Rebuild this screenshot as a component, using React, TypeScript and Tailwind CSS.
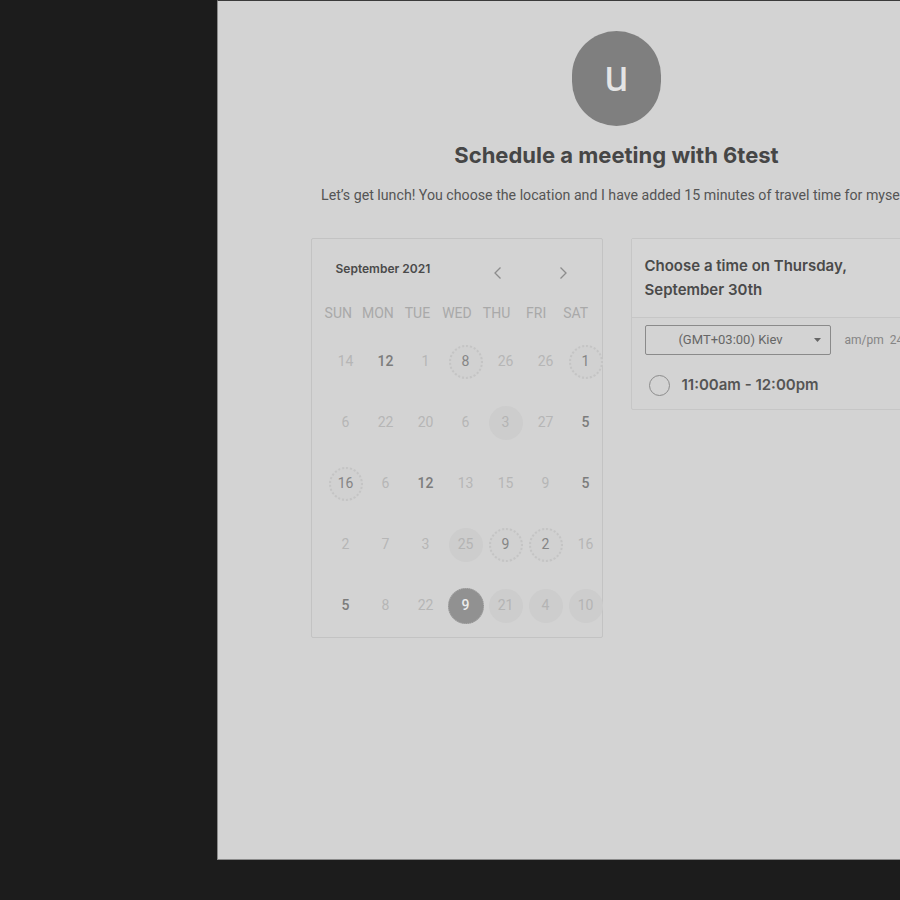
import React from "react";

type Kind = "light" | "bold" | "dotted" | "filled" | "selected";
type Cell = { n: string; k: Kind };

const rows: Cell[][] = [
  [
    { n: "14", k: "light" },
    { n: "12", k: "bold" },
    { n: "1", k: "light" },
    { n: "8", k: "dotted" },
    { n: "26", k: "light" },
    { n: "26", k: "light" },
    { n: "1", k: "dotted" },
  ],
  [
    { n: "6", k: "light" },
    { n: "22", k: "light" },
    { n: "20", k: "light" },
    { n: "6", k: "light" },
    { n: "3", k: "filled" },
    { n: "27", k: "light" },
    { n: "5", k: "bold" },
  ],
  [
    { n: "16", k: "dotted" },
    { n: "6", k: "light" },
    { n: "12", k: "bold" },
    { n: "13", k: "light" },
    { n: "15", k: "light" },
    { n: "9", k: "light" },
    { n: "5", k: "bold" },
  ],
  [
    { n: "2", k: "light" },
    { n: "7", k: "light" },
    { n: "3", k: "light" },
    { n: "25", k: "filled" },
    { n: "9", k: "dotted" },
    { n: "2", k: "dotted" },
    { n: "16", k: "light" },
  ],
  [
    { n: "5", k: "bold" },
    { n: "8", k: "light" },
    { n: "22", k: "light" },
    { n: "9", k: "selected" },
    { n: "21", k: "filled" },
    { n: "4", k: "filled" },
    { n: "10", k: "filled" },
  ],
];

function Day({ c }: { c: Cell }) {
  if (c.k === "light")
    return <span className="text-[14px] text-[#b6b6b6]">{c.n}</span>;
  if (c.k === "bold")
    return <span className="text-[14px] font-medium text-[#7c7c7c]">{c.n}</span>;
  if (c.k === "filled")
    return (
      <span className="w-[34px] h-[34px] rounded-full bg-[#cdcdcd] flex items-center justify-center text-[14px] text-[#b4b4b4]">
        {c.n}
      </span>
    );
  if (c.k === "dotted")
    return (
      <span className="w-[34px] h-[34px] rounded-full bg-[#d1d1d1] border-2 border-dotted border-[#c4c4c4] flex items-center justify-center text-[14px] text-[#858585]">
        {c.n}
      </span>
    );
  return (
    <span className="w-[36px] h-[36px] rounded-full bg-[#919191] border border-dotted border-[#a8a8a8] flex items-center justify-center text-[14px] font-medium text-[#ececec]">
      {c.n}
    </span>
  );
}

export default function App() {
  const heads = ["SUN", "MON", "TUE", "WED", "THU", "FRI", "SAT"];
  return (
    <div
      className="w-[900px] h-[900px] bg-[#1c1c1c] overflow-hidden"
      style={{ fontFamily: "Roboto, 'Liberation Sans', sans-serif" }}
    >
      <div className="ml-[217px] w-[796px] h-[860px] bg-[#d3d3d3] border-t border-t-[#3a3a3a] border-l border-l-[#8a8a8a] border-b border-b-[#8a8a8a] flex flex-col items-center">
        <div className="mt-[30px] ml-[2px] w-[89px] h-[95px] rounded-full bg-[#7f7f7f] flex items-center justify-center">
          <span className="text-[44px] leading-none text-[#e4e4e4] -mt-[6px]">u</span>
        </div>
        <h1
          className="mt-[15px] ml-[2px] text-[22px] leading-[28px] font-bold text-[#464646]"
          style={{ fontFamily: "Inter, 'Liberation Sans', sans-serif" }}
        >
          Schedule a meeting with 6test
        </h1>
        <p className="mt-[16px] ml-[2px] text-[14.2px] leading-[20px] text-[#555555] whitespace-nowrap">
          Let’s get lunch! You choose the location and I have added 15 minutes of travel time for myself.
        </p>

        <div className="mt-[33px] flex gap-[28px]">
          {/* Calendar */}
          <div className="w-[292px] h-[400px] border border-[#c3c3c3] rounded-[2px] relative">
            <div className="flex items-center pt-[22px] pl-[24px] h-[38px]">
              <span
                className="text-[12px] leading-[16px] font-semibold text-[#4a4a4a]"
                style={{ fontFamily: "Inter, 'Liberation Sans', sans-serif" }}
              >
                September 2021
              </span>
              <svg className="ml-[63px] mt-[8px]" width="10" height="14" viewBox="0 0 10 14" fill="none">
                <path d="M7.5 1.5 L2 7 L7.5 12.5" stroke="#8c8c8c" strokeWidth="1.3" />
              </svg>
              <svg className="ml-[55px] mt-[8px]" width="10" height="14" viewBox="0 0 10 14" fill="none">
                <path d="M2.5 1.5 L8 7 L2.5 12.5" stroke="#8c8c8c" strokeWidth="1.3" />
              </svg>
            </div>
            <div className="grid grid-cols-7 w-[277px] ml-[7px] mt-[26px]">
              {heads.map((h) => (
                <span key={h} className="text-center text-[14px] leading-[20px] text-[#a9a9a9]">
                  {h}
                </span>
              ))}
            </div>
            <div className="ml-[14px] mt-[8px] flex flex-col">
              {rows.map((r, i) => (
                <div key={i} className="grid grid-cols-[repeat(7,40px)] h-[61px]">
                  {r.map((c, j) => (
                    <div key={j} className="flex items-center justify-center">
                      <Day c={c} />
                    </div>
                  ))}
                </div>
              ))}
            </div>
          </div>

          {/* Time picker */}
          <div className="w-[290px] h-[172px] border border-[#c6c6c6] rounded-[2px] flex flex-col">
            <div
              className="px-[13px] pt-[15px] pb-[15px] h-[79px] border-b border-[#c6c6c6] bg-[#d5d5d5] text-[15px] leading-[24px] font-semibold text-[#4a4a4a]"
              style={{ fontFamily: "Inter, 'Liberation Sans', sans-serif" }}
            >
              Choose a time on Thursday,
              <br />
              September 30th
            </div>
            <div className="flex items-center pl-[13px] pt-[7px]">
              <div className="w-[186px] h-[30px] border border-[#8a8a8a] rounded-[2px] flex items-center relative">
                <span className="w-full text-center text-[13px] text-[#666666] pr-[14px]">(GMT+03:00) Kiev</span>
                <svg className="absolute right-[9px] top-[12px]" width="7" height="4" viewBox="0 0 7 4">
                  <path d="M0 0 L7 0 L3.5 4 Z" fill="#666666" />
                </svg>
              </div>
              <span className="ml-[14px] text-[12px] text-[#858585] whitespace-nowrap">am/pm&nbsp;&nbsp;24h</span>
            </div>
            <div className="flex items-center pl-[17px] mt-[19px]">
              <span className="w-[21px] h-[21px] rounded-full border-[1.5px] border-[#8c8c8c]" />
              <span
                className="ml-[12px] text-[15px] font-semibold text-[#555555]"
                style={{ fontFamily: "Inter, 'Liberation Sans', sans-serif" }}
              >
                11:00am - 12:00pm
              </span>
            </div>
          </div>
        </div>
      </div>
    </div>
  );
}
